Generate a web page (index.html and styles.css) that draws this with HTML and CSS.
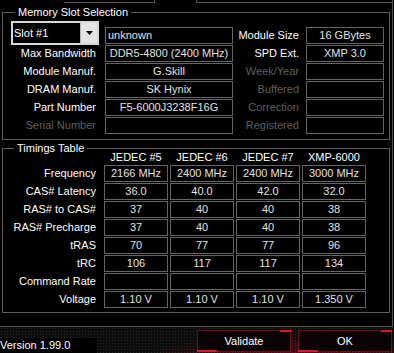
FILE: index.html
```html
<!DOCTYPE html>
<html lang="en">
<head>
    <meta charset="UTF-8">
    <meta name="viewport" content="width=device-width, initial-scale=1.0">
    <title>Memory SPD</title>
    <link rel="stylesheet" href="styles.css">
</head>
<body>
    <div class="tabline">
        <span class="tab-edge"></span>
        <span class="tab-active"></span>
        <span class="tab-rest"></span>
    </div>
    <div class="panel">
        <div class="group slot-group">
            <div class="group-title">Memory Slot Selection</div>
            <div class="slot-grid">
                <div class="slot-select">
                    <span class="slot-value">Slot #1</span>
                    <span class="drop-btn">
                        <svg width="7" height="4" viewBox="0 0 7 4"><polygon points="0,0 7,0 3.5,4" fill="#000"/></svg>
                    </span>
                </div>
                <div class="field text-left">unknown</div>
                <div class="label side">Module Size</div>
                <div class="field">16 GBytes</div>

                <div class="label">Max Bandwidth</div>
                <div class="field">DDR5-4800 (2400 MHz)</div>
                <div class="label side">SPD Ext.</div>
                <div class="field">XMP 3.0</div>

                <div class="label">Module Manuf.</div>
                <div class="field">G.Skill</div>
                <div class="label side off">Week/Year</div>
                <div class="field"></div>

                <div class="label">DRAM Manuf.</div>
                <div class="field">SK Hynix</div>
                <div class="label side off">Buffered</div>
                <div class="field"></div>

                <div class="label">Part Number</div>
                <div class="field">F5-6000J3238F16G</div>
                <div class="label side off">Correction</div>
                <div class="field"></div>

                <div class="label off">Serial Number</div>
                <div class="field"></div>
                <div class="label side off">Registered</div>
                <div class="field"></div>
            </div>
        </div>

        <div class="group timing-group">
            <div class="group-title">Timings Table</div>
            <div class="timing-grid">
                <div></div>
                <div class="col-head">JEDEC #5</div>
                <div class="col-head">JEDEC #6</div>
                <div class="col-head">JEDEC #7</div>
                <div class="col-head">XMP-6000</div>

                <div class="label">Frequency</div>
                <div class="field">2166 MHz</div>
                <div class="field">2400 MHz</div>
                <div class="field">2400 MHz</div>
                <div class="field">3000 MHz</div>

                <div class="label">CAS# Latency</div>
                <div class="field">36.0</div>
                <div class="field">40.0</div>
                <div class="field">42.0</div>
                <div class="field">32.0</div>

                <div class="label">RAS# to CAS#</div>
                <div class="field">37</div>
                <div class="field">40</div>
                <div class="field">40</div>
                <div class="field">38</div>

                <div class="label">RAS# Precharge</div>
                <div class="field">37</div>
                <div class="field">40</div>
                <div class="field">40</div>
                <div class="field">38</div>

                <div class="label">tRAS</div>
                <div class="field">70</div>
                <div class="field">77</div>
                <div class="field">77</div>
                <div class="field">96</div>

                <div class="label">tRC</div>
                <div class="field">106</div>
                <div class="field">117</div>
                <div class="field">117</div>
                <div class="field">134</div>

                <div class="label">Command Rate</div>
                <div class="field"></div>
                <div class="field"></div>
                <div class="field"></div>
                <div class="field"></div>

                <div class="label">Voltage</div>
                <div class="field">1.10 V</div>
                <div class="field">1.10 V</div>
                <div class="field">1.10 V</div>
                <div class="field">1.350 V</div>
            </div>
        </div>
    </div>

    <div class="footer">
        <div class="version">Version 1.99.0</div>
        <div class="buttons">
            <button type="button" class="btn">Validate</button>
            <button type="button" class="btn">OK</button>
        </div>
    </div>
</body>
</html>
```

FILE: styles.css
```css
* {
    box-sizing: border-box;
}

body {
    margin: 0;
    width: 394px;
    height: 353px;
    overflow: hidden;
    background-color: #000;
    color: #fff;
    font-family: "Liberation Sans", Arial, sans-serif;
    font-size: 11px;
}

/* tab strip above the page */
.tabline {
    display: flex;
    width: 393px;
    height: 3px;
}

.tab-edge {
    margin-left: 64px;
    width: 90px;
    border-bottom: 1px solid #555;
}

.tab-active {
    width: 43px;
    border-left: 1px solid #555;
    border-right: 1px solid #555;
}

.tab-rest {
    flex: 1;
    border-bottom: 1px solid #555;
    border-right: 1px solid #555;
}

.panel {
    width: 393px;
    height: 324px;
    padding: 9px 0 0 2px;
    border-right: 1px solid #555;
    border-bottom: 1px solid #555;
}

/* group boxes */
.group {
    width: 388px;
    border: 1px solid #5e5e5e;
}

.slot-group {
    height: 128px;
}

.timing-group {
    height: 165px;
    margin-top: 8px;
}

.group-title {
    display: table;
    margin: -8px 0 0 12px;
    padding: 0 3px;
    background-color: #000;
    line-height: 14px;
    white-space: nowrap;
}

.timing-group .group-title {
    margin-left: 11px;
}

.slot-grid {
    display: grid;
    grid-template-columns: 100px 128px 69px 78px;
    grid-auto-rows: 17px;
    gap: 1px 2px;
    margin-top: 8px;
}

.timing-grid {
    display: grid;
    grid-template-columns: 99px repeat(4, 64px);
    grid-template-rows: 14px;
    grid-auto-rows: 17px;
    gap: 1px 2px;
    margin-top: -5px;
}

.label {
    text-align: right;
    padding-right: 7px;
    line-height: 17px;
    white-space: nowrap;
}

.timing-grid .label {
    padding-right: 6px;
}

.label.side {
    padding-right: 5px;
}

.label.off {
    color: #5f5f5f;
}

.field {
    border: 1px solid #646464;
    color: #e2e2e2;
    text-align: center;
    line-height: 15px;
    white-space: nowrap;
    overflow: hidden;
}

.field.text-left {
    text-align: left;
    padding-left: 2px;
}

.col-head {
    text-align: center;
    line-height: 14px;
    white-space: nowrap;
}

/* slot combo box */
.slot-select {
    display: flex;
    align-items: stretch;
    width: 88px;
    height: 24px;
    margin: -6px 0 -1px 8px;
    border: 2px solid #d6d6d6;
    background-color: #000;
}

.slot-value {
    flex: 1;
    padding-left: 1px;
    line-height: 20px;
}

.drop-btn {
    display: flex;
    align-items: center;
    justify-content: center;
    width: 17px;
    background-color: #e4e4e4;
    border-left: 1px solid #b4b4b4;
}

.drop-btn svg {
    display: block;
}

/* bottom bar */
.footer {
    display: flex;
    align-items: flex-start;
    height: 26px;
    padding-right: 2px;
    background-color: #0c0c0c;
    background-image:
        radial-gradient(ellipse 150px 22px at 295px 30px, rgba(150, 8, 28, 0.6), transparent),
        radial-gradient(circle, #272727 0.7px, transparent 1px);
    background-size: auto, 3px 3px;
}

.version {
    width: 97px;
    height: 15px;
    margin-top: 11px;
    background-color: #000;
    line-height: 15px;
    white-space: nowrap;
}

.buttons {
    display: flex;
    gap: 7px;
    margin: 3px 0 0 auto;
}

.btn {
    position: relative;
    width: 94px;
    height: 22px;
    padding: 0;
    border: 1px solid #6d0b19;
    background-color: #0a0306;
    color: #fff;
    font: inherit;
}

.btn::before {
    content: "";
    position: absolute;
    top: -1px;
    right: -1px;
    width: 11px;
    height: 2px;
    background-color: #e0142f;
}

.btn::after {
    content: "";
    position: absolute;
    bottom: -1px;
    left: -1px;
    width: 20px;
    height: 2px;
    background-color: #e0142f;
}
```
